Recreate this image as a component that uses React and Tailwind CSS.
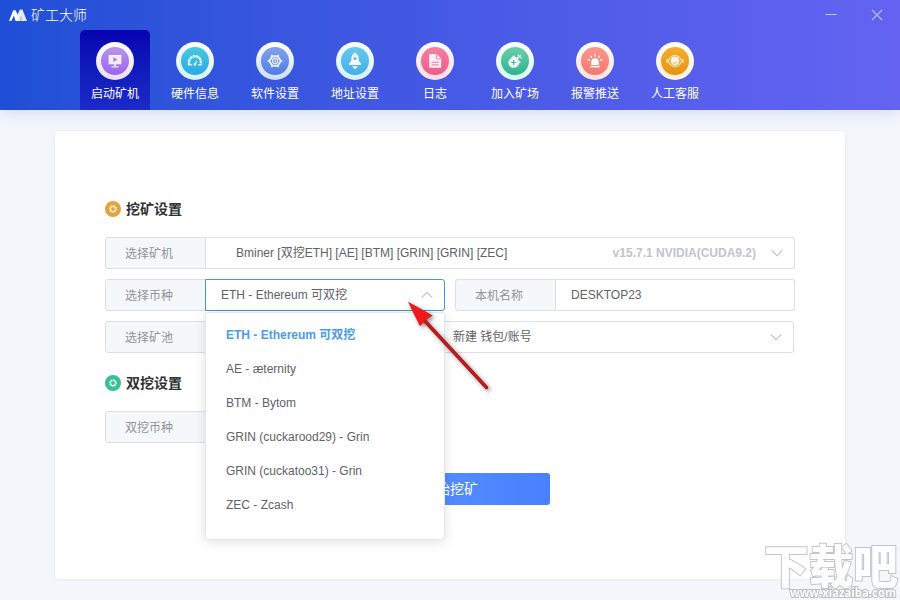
import React from "react";

function ChevronDown({ up }) {
  return (
    <svg width="12" height="8" viewBox="0 0 12 8" fill="none" stroke="#c0c4cc" strokeWidth="1.2">
      <path d={up ? "M0.7 6.7 6 1.4 11.3 6.7" : "M0.7 1.3 6 6.6 11.3 1.3"} />
    </svg>
  );
}

const glyphs = {
  start: (
    <g>
      <path d="M.6.9h12.800v9.400H.6z" fill="#fff" opacity=".85" />
      <path d="M5.400 3.200v4.800l4-2.400z" fill="#a878ec" />
      <path d="M6.200 10h1.600v2.400H6.200zM3.400 12.200h7.200v1.200H3.400z" fill="#fff" opacity=".85" />
    </g>
  ),
  gauge: (
    <g fill="none" stroke="#fff" opacity=".85">
      <path d="M1 11V8.200a6 6 0 0 1 12 0V11" strokeWidth="2.400" strokeDasharray="2.800 .4" />
      <path d="M0 10.900h4M10 10.900h4" strokeWidth="1.400" />
      <path d="M6.800 10.400 9 6.800" strokeWidth="1.400" />
      <circle cx="6.800" cy="10.500" r="1.100" fill="#fff" strokeWidth=".6" />
    </g>
  ),
  gear: (
    <g fill="none" stroke="#fff" opacity=".85">
      <path d="M4.300 2.200h5.400l3 4.800-3 4.800H4.300L1.300 7z" strokeWidth="2" strokeLinejoin="round" />
      <circle cx="7" cy="7" r="2.600" strokeWidth="1.100" />
      <circle cx="7" cy="7" r="1" strokeWidth=".7" />
      <path d="M3.800.8v2M10.200.8v2M3.800 11.200v2M10.200 11.200v2M-.4 7h2M12.400 7h2" strokeWidth="1.700" />
    </g>
  ),
  rocket: (
    <g>
      <path d="M7-1.500C4.300.2 3.300 2.600 3.300 4.800v2L1 9.400v1.500h12V9.400l-2.300-2.600v-2C10.700 2.600 9.700.2 7-1.500z" fill="#fff" opacity=".94" />
      <circle cx="7" cy="4.400" r="1.500" fill="#50bce9" />
      <path d="M3.900 12.200h6.200L7 15.200z" fill="#fff" opacity=".9" />
    </g>
  ),
  log: (
    <g>
      <path d="M1.200.100h7.600l4.400 4.500v9.200h-12z" fill="#fff" opacity=".9" />
      <path d="M8.600.100v4.700h4.600" fill="none" stroke="#f16f98" strokeWidth=".8" />
      <path d="M3.500 8.200h7.200M3.500 10.900h7.200" stroke="#f16f98" strokeWidth="1" />
    </g>
  ),
  farm: (
    <g>
      <path d="M6 1.200 8 3.700l2-1.200 1 1.400-1.200 1.400 3.200 3.200-1.900.9c-.5 2.600-2.600 4.400-5.400 4.400C2.500 13.800.4 11.600.4 8.700.4 6 2.800 3.900 6 1.200z" fill="#fff" opacity=".92" />
      <path d="M5.700 6v5M3.200 8.500h5" stroke="#48bd99" strokeWidth="1.200" />
      <path d="m9.800.6 1.500 2.200 2.500 1.300M11.300 2.800l1.500-1.800" fill="none" stroke="#fff" strokeWidth="1.200" opacity=".8" />
    </g>
  ),
  alarm: (
    <g>
      <path d="M3.200 11V8a3.800 3.800 0 0 1 7.600 0v3z" fill="#fff" />
      <path d="M2.100 12.600h9.800" stroke="#fff" strokeWidth="1.500" />
      <path d="M7-.3v2.700M2.300 1.700l1.500 2.200M11.700 1.700l-1.500 2.200M-.6 5.400l2.600 1M14.600 5.400l-2.600 1" stroke="#fff" strokeWidth="1.300" opacity=".9" />
    </g>
  ),
  service: (
    <g>
      <path d="M-1.200 5.200v3.600M15.200 5.200v3.600" stroke="#fff" strokeWidth="1.600" opacity=".75" />
      <path d="M0 7C2 3.200 4.200 1.300 7 1.300S12 3.200 14 7c-2 3.800-4.200 5.700-7 5.700S2 10.800 0 7z" fill="none" stroke="#fff" strokeWidth="1.200" opacity=".7" />
      <circle cx="7" cy="7" r="4.400" fill="#fff" opacity=".9" />
      <path d="M5 8.300c1.200 1.600 3.600 1 4.200-1" fill="none" stroke="#efa01d" strokeWidth=".8" />
    </g>
  ),
};

const tabs = [
  { key: "start", label: "启动矿机", ring: "from-white to-[#eedcff]", disc: "from-[#b794ea] to-[#9a64ef]" },
  { key: "gauge", label: "硬件信息", ring: "from-white to-[#d5f3ff]", disc: "from-[#45c9e0] to-[#2ba9e8]" },
  { key: "gear", label: "软件设置", ring: "from-white to-[#cddcff]", disc: "from-[#83a2eb] to-[#507ce4]" },
  { key: "rocket", label: "地址设置", ring: "from-white to-[#d2f1ff]", disc: "from-[#66c9ef] to-[#43aeea]" },
  { key: "log", label: "日志", ring: "from-white to-[#ffdce9]", disc: "from-[#f480a2] to-[#ef5b8a]" },
  { key: "farm", label: "加入矿场", ring: "from-white to-[#d5fff3]", disc: "from-[#67ceab] to-[#2bb58e]" },
  { key: "alarm", label: "报警推送", ring: "from-white to-[#ffe2df]", disc: "from-[#fc958c] to-[#f87570]" },
  { key: "service", label: "人工客服", ring: "from-white to-[#fff0dc]", disc: "from-[#f3ae2c] to-[#eb920c]" },
];

const coins = [
  "ETH - Ethereum 可双挖",
  "AE - æternity",
  "BTM - Bytom",
  "GRIN (cuckarood29) - Grin",
  "GRIN (cuckatoo31) - Grin",
  "ZEC - Zcash",
];

function Tab({ tab, active }) {
  return (
    <div
      className={
        "flex h-20 w-[70px] flex-col items-center rounded-t-[5px] pt-3 " +
        (active ? "bg-linear-to-b from-[#0702b0] to-[#1b2bc7]" : "")
      }
    >
      <div className={"flex size-[38px] items-center justify-center rounded-full bg-linear-to-b " + tab.ring}>
        <div className={"flex size-7 items-center justify-center rounded-full bg-linear-to-b " + tab.disc}>
          <svg width="14" height="14" viewBox="0 0 14 14" overflow="visible">
            {glyphs[tab.key]}
          </svg>
        </div>
      </div>
      <span className="mt-1.5 text-xs leading-4 whitespace-nowrap text-white">{tab.label}</span>
    </div>
  );
}

function Label({ children }) {
  return (
    <div className="flex w-[101px] shrink-0 items-center rounded-l-[3px] border border-[#dcdfe6] bg-[#f5f7fa] pt-px pl-[19px] text-[#909399]">
      {children}
    </div>
  );
}

function Heading({ color, children }) {
  return (
    <div className="flex h-5 items-center gap-[5px] text-sm font-bold text-[#303133]">
      <svg width="16" height="16" viewBox="0 0 16 16">
        <circle cx="8" cy="8" r="8" fill={color} />
        <circle cx="8" cy="8" r="2.600" fill="none" stroke="#fff" strokeWidth="1.300" opacity=".9" />
        <circle cx="8" cy="8" r="3.600" fill="none" stroke="#fff" strokeWidth=".9" strokeDasharray="1.400 1.430" opacity=".8" />
      </svg>
      {children}
    </div>
  );
}

export default function App() {
  return (
    <div className="relative flex h-[600px] w-[900px] flex-col overflow-hidden bg-[#f4f6fb] font-['Liberation_Sans','Noto_Sans_CJK_SC',sans-serif] text-xs text-[#606266]">
      <header className="h-[110px] shrink-0 bg-linear-to-r from-[#1e4fd6] to-[#6463f2] shadow-[0_2px_14px_rgba(70,90,220,0.2)]">
        <div className="flex h-[30px] items-center justify-between pr-[17px] pl-[9px]">
          <div className="flex items-center gap-1">
            <svg width="18" height="12" viewBox="0 0 18 12">
              <path d="M0 12 4.200 1.200h2.300L10 8l-1 4H6.600L4.900 6.500 2.400 12z" fill="#fff" />
              <path d="M8.400 12 8.800 5 11 .500h2.400L18 12z" fill="#e6ecff" />
              <path d="M11.800 12 12.300 7.500" stroke="#5b80e8" strokeWidth=".7" />
            </svg>
            <span className="text-sm leading-5 font-light text-white">矿工大师</span>
          </div>
          <div className="flex items-center gap-[34px]">
            <svg width="12" height="12" viewBox="0 0 12 12" stroke="#c4c8ff" strokeWidth="1">
              <path d="M0.500 5.500h11" />
            </svg>
            <svg width="12" height="12" viewBox="0 0 12 12" stroke="#b4b8fb" strokeWidth="1.300">
              <path d="M1 1l10 10M11 1 1 11" />
            </svg>
          </div>
        </div>
        <nav className="flex gap-2.5 pl-20">
          {tabs.map((t, i) => (
            <Tab key={t.key} tab={t} active={i === 0} />
          ))}
        </nav>
      </header>

      <main className="mx-[55px] mt-[21px] flex h-[448px] flex-col rounded-[3px] bg-white px-[50px] pt-[68px] shadow-[0_0_3px_rgba(40,60,120,0.1)]">
        <Heading color="#e6a23c">挖矿设置</Heading>

        <div className="mt-[18px] flex h-8">
          <Label>选择矿机</Label>
          <div className="flex flex-1 items-center rounded-r-[3px] border border-l-0 border-[#dcdfe6] pr-[11px] pl-[30px]">
            <span className="flex-1">Bminer [双挖ETH] [AE] [BTM] [GRIN] [GRIN] [ZEC]</span>
            <span className="mr-[15px] font-bold text-[#c0c4cc]">v15.7.1 NVIDIA(CUDA9.2)</span>
            <ChevronDown />
          </div>
        </div>

        <div className="mt-2.5 flex h-8">
          <Label>选择币种</Label>
          <div className="relative -ml-px w-60">
            <div className="flex h-8 items-center justify-between rounded-r-[3px] border border-[#4596d1] bg-white pr-[11px] pl-[15px]">
              <span>ETH - Ethereum 可双挖</span>
              <ChevronDown up />
            </div>
            <ul className="absolute top-[33px] left-0 z-10 h-[228px] w-[240px] rounded-[3px] border border-[#e4e7ed] bg-white pt-[5px] shadow-[0_2px_12px_rgba(0,0,0,0.12)]">
              {coins.map((c, i) => (
                <li
                  key={c}
                  className={"flex h-[34px] items-center pl-5 " + (i === 0 ? "font-bold text-[#4a9de6]" : "")}
                >
                  {c}
                </li>
              ))}
            </ul>
          </div>
          <div className="ml-2.5 flex flex-1">
            <Label>本机名称</Label>
            <div className="flex flex-1 items-center rounded-r-[3px] border border-l-0 border-[#dcdfe6] pl-[15px]">
              DESKTOP23
            </div>
          </div>
        </div>

        <div className="mt-2.5 flex h-8 pr-px">
          <Label>选择矿池</Label>
          <div className="w-[232px] border-y border-[#dcdfe6]" />
          <div className="flex flex-1 items-center justify-between rounded-r-[3px] border border-[#dcdfe6] pr-[11px] pl-[14px]">
            <span>新建 钱包/账号</span>
            <ChevronDown />
          </div>
        </div>

        <div className="mt-5">
          <Heading color="#34c08f">双挖设置</Heading>
        </div>

        <div className="mt-[18px] flex h-8">
          <Label>双挖币种</Label>
          <div className="w-[239px] rounded-r-[3px] border border-l-0 border-[#dcdfe6]" />
        </div>

        <button className="mx-auto mt-[30px] h-8 w-[200px] rounded-[3px] bg-linear-to-r from-[#5d96ff] to-[#4880ff] text-sm text-white">
          开始挖矿
        </button>
      </main>

      <svg
        className="absolute top-[295px] left-[400px] z-20 drop-shadow-[2px_2px_2px_rgba(0,0,0,0.45)]"
        width="96"
        height="102"
        viewBox="0 0 96 102"
      >
        <path d="M24 25 86.500 92.500" stroke="#a30f12" strokeWidth="3.400" strokeLinecap="round" />
        <path d="M24 25 86 92" stroke="#cb1d1d" strokeWidth="1.800" strokeLinecap="round" />
        <path d="M8.500 7.300 32.300 20.500 27.300 23.500 24.800 26 20 30.800z" fill="#f01818" stroke="#c81010" strokeWidth=".5" />
      </svg>

      <div className="absolute right-[2px] bottom-0 z-20 opacity-90">
        <svg width="134" height="60" viewBox="0 0 134 60" overflow="visible">
          <text
            className="font-['Noto_Sans_CJK_SC',sans-serif] font-black"
            x="0"
            y="43"
            fontSize="46"
            textLength="134"
            lengthAdjust="spacingAndGlyphs"
            fill="#fff"
            stroke="#bcbec4"
            strokeWidth="2"
            paintOrder="stroke"
          >
            下载吧
          </text>
          <text
            className="font-['Open_Sans',sans-serif] font-bold"
            x="26"
            y="57"
            fontSize="12"
            textLength="106"
            lengthAdjust="spacingAndGlyphs"
            fill="#fff"
            stroke="#b4b6bc"
            strokeWidth="2"
            paintOrder="stroke"
          >
            www.xiazaiba.com
          </text>
        </svg>
      </div>
    </div>
  );
}
